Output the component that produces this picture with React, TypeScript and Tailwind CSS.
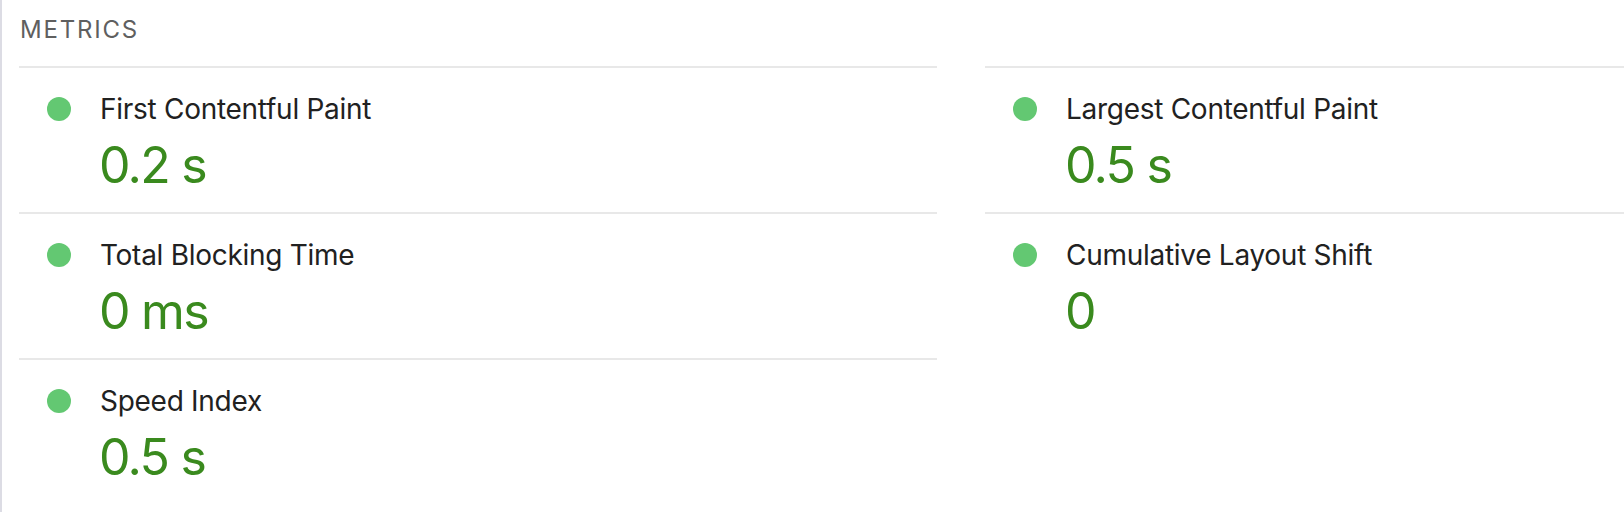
import React from "react";

type Metric = { title: string; value: string };

const left: Metric[] = [
  { title: "First Contentful Paint", value: "0.2 s" },
  { title: "Total Blocking Time", value: "0 ms" },
  { title: "Speed Index", value: "0.5 s" },
];
const right: Metric[] = [
  { title: "Largest Contentful Paint", value: "0.5 s" },
  { title: "Cumulative Layout Shift", value: "0" },
];

function Row({ m }: { m: Metric }) {
  return (
    <div className="border-t-2 border-[#e8e8e8] pt-[21px] pb-[17px]">
      <div className="flex items-center h-[40px]">
        <span className="ml-[28px] w-[24px] h-[24px] rounded-full bg-[#63c872] shrink-0" />
        <span className="ml-[29px] text-[28px] leading-[40px] tracking-[-0.01em] text-[#212121]">
          {m.title}
        </span>
      </div>
      <div className="mt-[6px] pl-[80px] text-[50px] leading-[60px] tracking-[-0.035em] text-[#3a8a1e]">
        {m.value}
      </div>
    </div>
  );
}

export default function App() {
  return (
    <div
      className="w-[1624px] h-[512px] overflow-hidden bg-white border-l-2 border-[#dcdce4] pl-[17px]"
      style={{ fontFamily: "Inter, 'Noto Sans', sans-serif" }}
    >
      <div className="pt-[14px] mb-[20px] pl-[1px] text-[24px] leading-[32px] tracking-[0.075em] text-[#5f5f5f]">
        METRICS
      </div>
      <div className="flex gap-[48px] w-[1884px]">
        <div className="w-[918px] shrink-0 flex flex-col">
          {left.map((m) => (
            <Row key={m.title} m={m} />
          ))}
        </div>
        <div className="w-[918px] shrink-0 flex flex-col">
          {right.map((m) => (
            <Row key={m.title} m={m} />
          ))}
        </div>
      </div>
    </div>
  );
}
